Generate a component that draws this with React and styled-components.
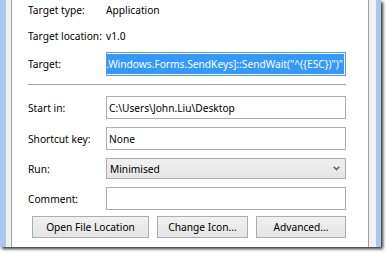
import React from "react";
import styled, { createGlobalStyle } from "styled-components";

const Global = createGlobalStyle`
  html, body { margin: 0; padding: 0; background: #ffffff; }
  body { font-family: "Noto Sans", "Liberation Sans", sans-serif; }
`;

const Page = styled.div`
  width: 386px;
  height: 254px;
  overflow: hidden;
  background: #ffffff;
`;

const Window = styled.div`
  width: 381px;
  height: 247px;
  display: flex;
  box-shadow: 2px 2px 3px rgba(0, 0, 0, 0.8);
`;

const Frame = styled.div`
  flex: none;
  width: ${(p) => p.$inner}px;
  background: #f0f0f0;
  border-style: solid;
  border-color: #a9c8ea;
  border-width: ${(p) => (p.$side === "left" ? "0 0 0 6px" : "0 5px 0 0")};
  position: relative;
  &::after {
    content: "";
    position: absolute;
    top: 0;
    bottom: 0;
    width: 1px;
    background: #a0a0a0;
    ${(p) => (p.$side === "left" ? "right: 0;" : "left: 0;")}
  }
`;

const Content = styled.div`
  flex: 1;
  background: #ffffff;
  padding: 0 21px 0 16px;
  display: flex;
  flex-direction: column;
  font-size: 10.2px;
  color: #000000;
`;

const Row = styled.div`
  display: grid;
  grid-template-columns: 78px 240px;
  align-items: center;
  height: ${(p) => p.$h}px;
  margin-top: ${(p) => p.$mt || 0}px;
  flex: none;
`;

const Label = styled.span`
  white-space: nowrap;
  line-height: 14px;
`;

const Value = styled.span`
  white-space: nowrap;
  line-height: 14px;
`;

const TextBox = styled.div`
  box-sizing: border-box;
  height: 100%;
  border: 1px solid ${(p) => (p.$focused ? "#569de5" : "#abadb3")};
  background: #ffffff;
  padding: ${(p) => (p.$focused ? "1px" : "0 2px")};
  display: flex;
  align-items: center;
  justify-content: ${(p) => (p.$focused ? "flex-end" : "flex-start")};
  overflow: hidden;
  white-space: nowrap;
`;

const Selected = styled.span`
  height: 100%;
  display: flex;
  align-items: center;
  background: #3399ff;
  color: #ffffff;
  padding: 0 1px;
  white-space: nowrap;
  flex: none;
`;

const Select = styled.div`
  box-sizing: border-box;
  height: 100%;
  border: 1px solid #acacac;
  background: linear-gradient(#f0f0f0, #e5e5e5);
  padding: 0 5px 0 3px;
  display: flex;
  align-items: center;
  justify-content: space-between;
`;

const Separator = styled.div`
  height: 1px;
  background: #a0a0a0;
  margin: 8px 0 0 0;
  width: 318px;
  flex: none;
`;

const ButtonRow = styled.div`
  display: flex;
  justify-content: flex-end;
  gap: 8px;
  width: 318px;
  height: 22px;
  margin-top: 6px;
  flex: none;
`;

const Button = styled.div`
  box-sizing: border-box;
  width: ${(p) => p.$w}px;
  height: 100%;
  border: 1px solid #acacac;
  background: linear-gradient(#f0f0f0, #e5e5e5);
  display: flex;
  align-items: center;
  justify-content: center;
  white-space: nowrap;
`;

const Chevron = () => (
  <svg width="7" height="5" viewBox="0 0 7 5">
    <path d="M0.7 0.8 L3.5 3.6 L6.3 0.8" fill="none" stroke="#666666" strokeWidth="1.6" />
  </svg>
);

export default function App() {
  return (
    <>
      <Global />
      <Page>
        <Window>
          <Frame $side="left" $inner={6} />
          <Content>
            <Row $h={20}>
              <Label>Target type:</Label>
              <Value>Application</Value>
            </Row>
            <Row $h={20} $mt={6}>
              <Label>Target location:</Label>
              <Value>v1.0</Value>
            </Row>
            <Row $h={24} $mt={6}>
              <Label>Target:</Label>
              <TextBox $focused>
                <Selected>[System.Windows.Forms.SendKeys]::SendWait("^({"{"}ESC{"}"})")"</Selected>
              </TextBox>
            </Row>
            <Separator />
            <Row $h={23} $mt={11}>
              <Label>Start in:</Label>
              <TextBox>C:\Users\John.Liu\Desktop</TextBox>
            </Row>
            <Row $h={23} $mt={8}>
              <Label>Shortcut key:</Label>
              <TextBox>None</TextBox>
            </Row>
            <Row $h={21} $mt={8}>
              <Label>Run:</Label>
              <Select>
                <span>Minimised</span>
                <Chevron />
              </Select>
            </Row>
            <Row $h={23} $mt={8}>
              <Label>Comment:</Label>
              <TextBox />
            </Row>
            <ButtonRow>
              <Button $w={117}>Open File Location</Button>
              <Button $w={91}>Change Icon...</Button>
              <Button $w={90}>Advanced...</Button>
            </ButtonRow>
          </Content>
          <Frame $side="right" $inner={8} />
        </Window>
      </Page>
    </>
  );
}
